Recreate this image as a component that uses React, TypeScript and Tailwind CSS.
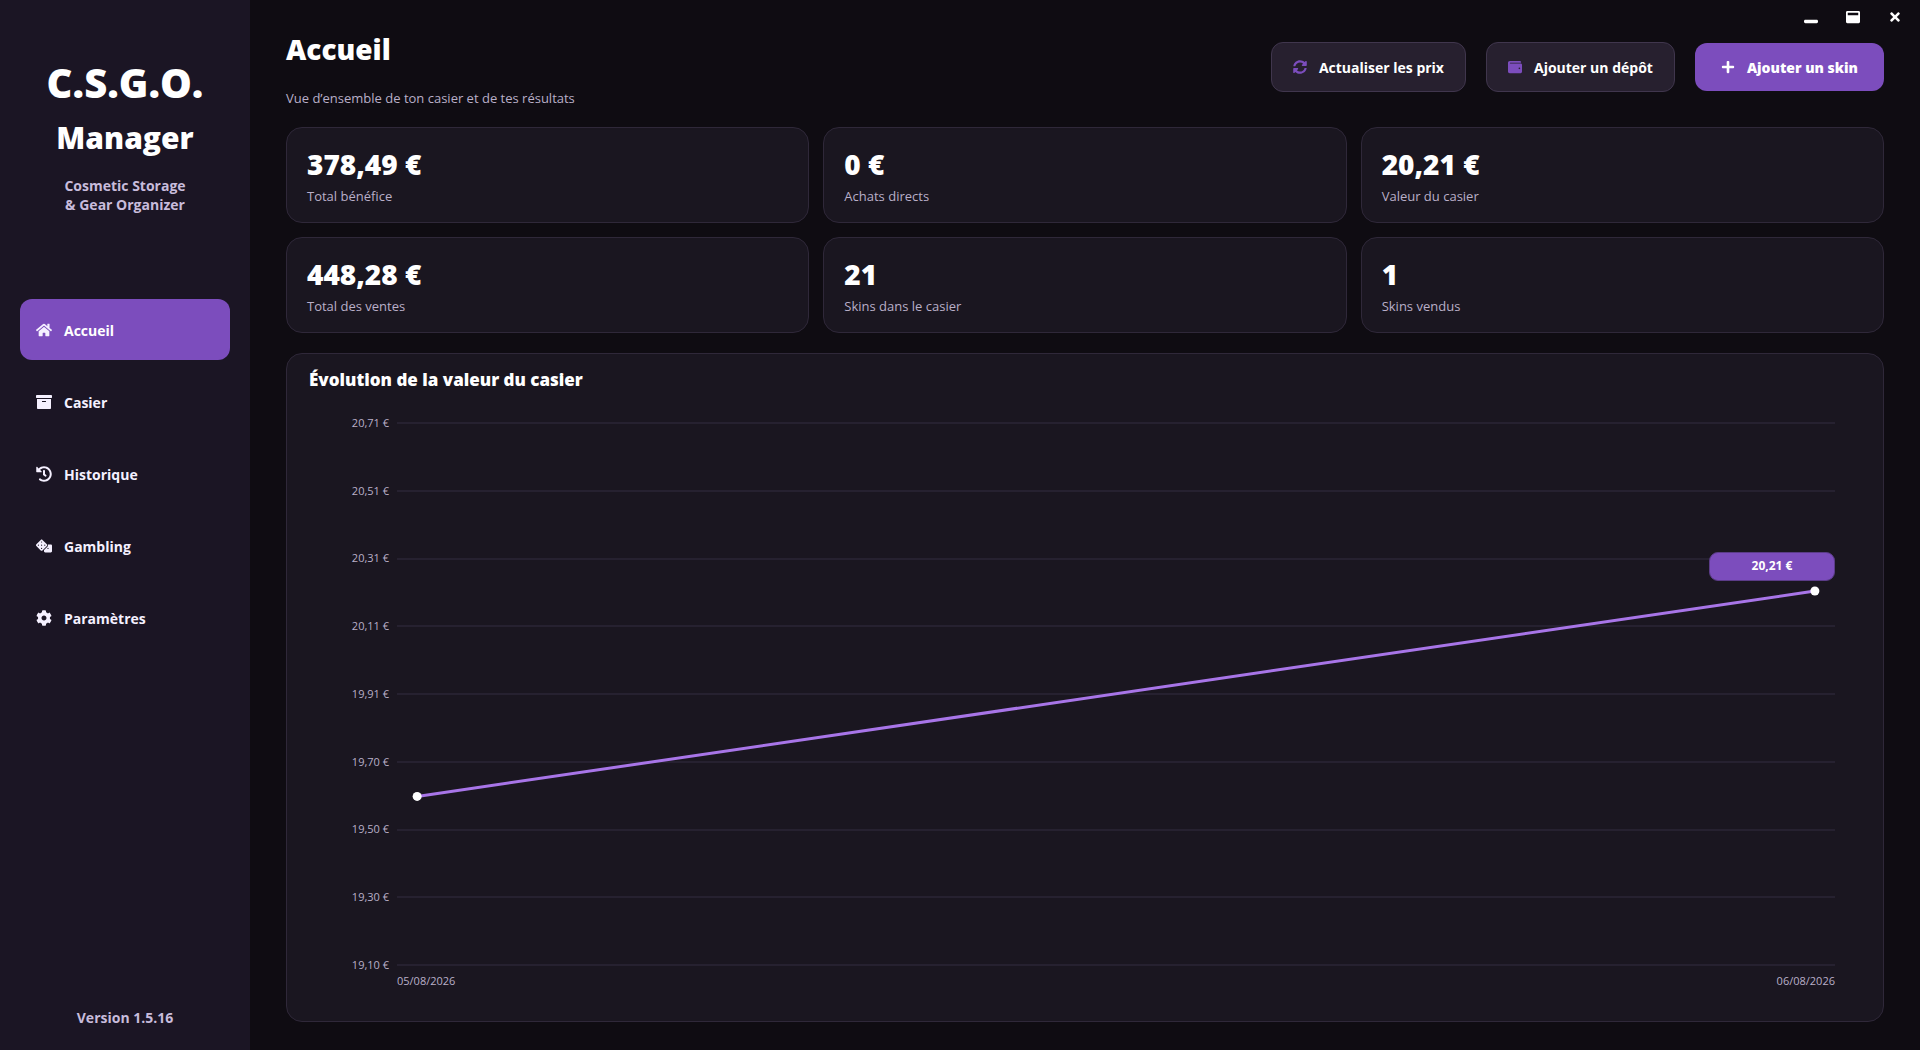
import type { IconType } from "react-icons";
import {
  FaArchive,
  FaCog,
  FaDice,
  FaHistory,
  FaHome,
  FaPlus,
  FaSyncAlt,
  FaTimes,
  FaWallet,
  FaWindowMaximize,
  FaWindowMinimize,
} from "react-icons/fa";

type NavItem = {
  label: string;
  icon: IconType;
};

type Stat = {
  value: string;
  label: string;
};

const navItems: NavItem[] = [
  { label: "Accueil", icon: FaHome },
  { label: "Casier", icon: FaArchive },
  { label: "Historique", icon: FaHistory },
  { label: "Gambling", icon: FaDice },
  { label: "Paramètres", icon: FaCog },
];

const stats: Stat[] = [
  { value: "378,49 €", label: "Total bénéfice" },
  { value: "0 €", label: "Achats directs" },
  { value: "20,21 €", label: "Valeur du casier" },
  { value: "448,28 €", label: "Total des ventes" },
  { value: "21", label: "Skins dans le casier" },
  { value: "1", label: "Skins vendus" },
];

const ticks = [
  "20,71 €",
  "20,51 €",
  "20,31 €",
  "20,11 €",
  "19,91 €",
  "19,70 €",
  "19,50 €",
  "19,30 €",
  "19,10 €",
];

// Positions in percent of the plot area
const start = { x: "1.4%", y: "68.9%" };
const end = { x: "98.6%", y: "31%" };

function Sidebar() {
  return (
    <aside className="flex w-[250px] shrink-0 flex-col bg-[#1b1524] px-5 pt-[59px] pb-5">
      <div className="text-center">
        <p className="text-[40px] leading-[48px] font-extrabold text-white">
          C.S.G.O.
        </p>
        <p className="mt-2 text-[30px] leading-[46px] font-extrabold text-white">
          Manager
        </p>
        <p className="mt-[15px] text-sm leading-[19px] font-bold text-[#c8bcdc]">
          Cosmetic Storage
          <br />
          &amp; Gear Organizer
        </p>
      </div>

      <nav className="mt-[85px] flex flex-col gap-[11px]">
        {navItems.map((item, index) => (
          <button
            key={item.label}
            type="button"
            className={
              index === 0
                ? "flex h-[61px] items-center gap-3 rounded-xl bg-[#7c4dbd] px-4 text-sm font-bold text-white"
                : "flex h-[61px] items-center gap-3 rounded-xl px-4 text-sm font-bold text-[#f5f0ff]"
            }
          >
            <item.icon className="size-4 text-[#f5f0ff]" />
            <span className="pt-0.5">{item.label}</span>
          </button>
        ))}
      </nav>

      <p className="mt-auto text-center text-sm leading-6 font-bold text-[#c8bcdc]">
        Version 1.5.16
      </p>
    </aside>
  );
}

function WindowControls() {
  return (
    <div className="absolute top-0 right-1 flex text-white">
      <button
        type="button"
        aria-label="Réduire"
        className="flex h-[34px] w-[42px] items-center justify-center"
      >
        <FaWindowMinimize className="size-[14px]" />
      </button>
      <button
        type="button"
        aria-label="Agrandir"
        className="flex h-[34px] w-[42px] items-center justify-center"
      >
        <FaWindowMaximize className="size-[14px]" />
      </button>
      <button
        type="button"
        aria-label="Fermer"
        className="flex h-[34px] w-[42px] items-center justify-center"
      >
        <FaTimes className="size-[14px]" />
      </button>
    </div>
  );
}

function ValueChart() {
  return (
    <section className="mt-5 flex flex-1 flex-col rounded-2xl border border-[#2f2839] bg-[#1a1620] px-[22px] pt-3 pb-8">
      <h2 className="text-[17px] leading-7 font-extrabold text-white">
        Évolution de la valeur du casier
      </h2>

      <div className="mt-[29px] mr-[26px] ml-[38px] flex flex-1 gap-2">
        <div className="flex w-[42px] flex-col justify-between text-right text-[11px] text-[#b9afc8]">
          {ticks.map((tick) => (
            <span
              key={tick}
              className="flex h-0 items-center justify-end whitespace-nowrap"
            >
              {tick}
            </span>
          ))}
        </div>

        <div className="relative flex flex-1 flex-col justify-between">
          {ticks.map((tick) => (
            <div key={tick} className="-my-px h-0.5 bg-[#262130]" />
          ))}

          <svg
            className="absolute inset-0 size-full overflow-visible"
            role="img"
            aria-label="Valeur du casier"
          >
            <line
              x1={start.x}
              y1={start.y}
              x2={end.x}
              y2={end.y}
              stroke="#a875e8"
              strokeWidth="3"
            />
            <circle cx={start.x} cy={start.y} r="4.5" fill="#ffffff" />
            <circle cx={end.x} cy={end.y} r="4.5" fill="#ffffff" />
          </svg>

          <div className="absolute top-[23.8%] right-0 flex h-[29px] w-[126px] items-center justify-center rounded-[9px] border border-[#5b3c88] bg-[#7c4dbd] text-xs font-bold text-white">
            20,21 €
          </div>
        </div>
      </div>

      <div className="mt-2 mr-[26px] ml-[88px] flex justify-between text-[11px] leading-4 text-[#b9afc8]">
        <span>05/08/2026</span>
        <span>06/08/2026</span>
      </div>
    </section>
  );
}

export default function App() {
  return (
    <div className="relative flex min-h-screen bg-[#0f0c12] font-['Open_Sans','Noto_Sans',sans-serif]">
      <Sidebar />
      <WindowControls />

      <main className="flex flex-1 flex-col px-9 pt-[29px] pb-7">
        <header className="flex items-start justify-between">
          <div>
            <h1 className="text-[28px] leading-10 font-extrabold text-white">
              Accueil
            </h1>
            <p className="mt-[17px] text-[13px] leading-6 text-[#b9afc8]">
              Vue d’ensemble de ton casier et de tes résultats
            </p>
          </div>

          <div className="mt-[13px] flex items-center gap-5 text-sm font-bold text-white">
            <button
              type="button"
              className="flex h-[50px] items-center gap-3 rounded-xl border border-[#40364d] bg-[#27202f] px-[21px]"
            >
              <FaSyncAlt className="size-[14px] text-[#7c4dbd]" />
              <span className="pt-0.5">Actualiser les prix</span>
            </button>
            <button
              type="button"
              className="flex h-[50px] items-center gap-3 rounded-xl border border-[#40364d] bg-[#27202f] px-[21px]"
            >
              <FaWallet className="size-[14px] text-[#7c4dbd]" />
              <span className="pt-0.5">Ajouter un dépôt</span>
            </button>
            <button
              type="button"
              className="flex h-12 items-center gap-3 rounded-xl bg-[#7c4dbd] px-[26px] font-extrabold"
            >
              <FaPlus className="size-[14px]" />
              <span className="pt-0.5">Ajouter un skin</span>
            </button>
          </div>
        </header>

        <div className="mt-[17px] grid grid-cols-3 gap-[14px]">
          {stats.map((stat) => (
            <div
              key={stat.label}
              className="h-24 rounded-2xl border border-[#2f2839] bg-[#1a1620] px-5 pt-5"
            >
              <p className="text-[28px] leading-8 font-extrabold text-white">
                {stat.value}
              </p>
              <p className="mt-[6px] text-[13px] leading-5 text-[#b9afc8]">
                {stat.label}
              </p>
            </div>
          ))}
        </div>

        <ValueChart />
      </main>
    </div>
  );
}
